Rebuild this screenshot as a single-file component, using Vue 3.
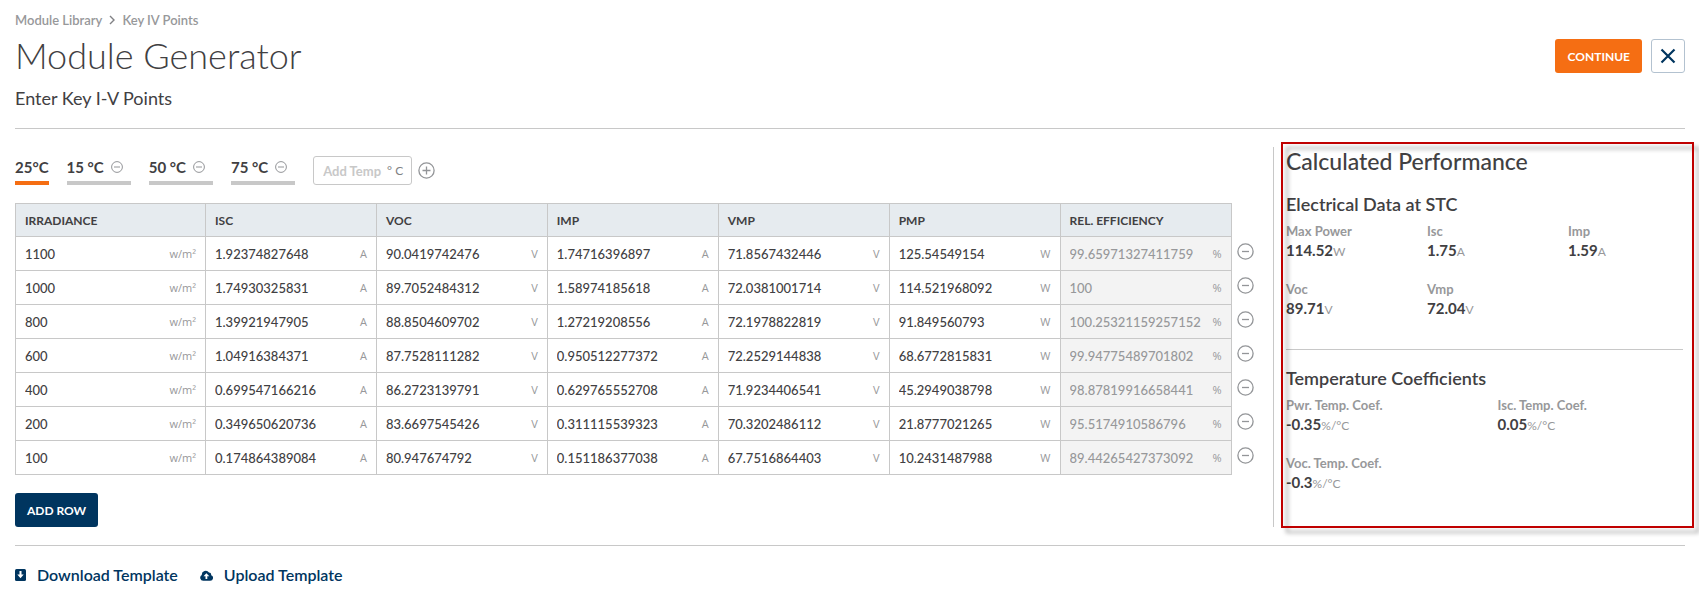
<script setup>
import { ref } from 'vue'

const columns = [
  { key: 'irradiance', label: 'IRRADIANCE', unit: 'w/m²' },
  { key: 'isc', label: 'ISC', unit: 'A' },
  { key: 'voc', label: 'VOC', unit: 'V' },
  { key: 'imp', label: 'IMP', unit: 'A' },
  { key: 'vmp', label: 'VMP', unit: 'V' },
  { key: 'pmp', label: 'PMP', unit: 'W' },
  { key: 'eff', label: 'REL. EFFICIENCY', unit: '%', computed: true }
]

const makeRow = (...values) => Object.fromEntries(columns.map((c, i) => [c.key, values[i] ?? '']))

const rows = ref([
  makeRow('1100', '1.92374827648', '90.0419742476', '1.74716396897', '71.8567432446', '125.54549154', '99.65971327411759'),
  makeRow('1000', '1.74930325831', '89.7052484312', '1.58974185618', '72.0381001714', '114.521968092', '100'),
  makeRow('800', '1.39921947905', '88.8504609702', '1.27219208556', '72.1978822819', '91.849560793', '100.25321159257152'),
  makeRow('600', '1.04916384371', '87.7528111282', '0.950512277372', '72.2529144838', '68.6772815831', '99.94775489701802'),
  makeRow('400', '0.699547166216', '86.2723139791', '0.629765552708', '71.9234406541', '45.2949038798', '98.87819916658441'),
  makeRow('200', '0.349650620736', '83.6697545426', '0.311115539323', '70.3202486112', '21.8777021265', '95.5174910586796'),
  makeRow('100', '0.174864389084', '80.947674792', '0.151186377038', '67.7516864403', '10.2431487988', '89.44265427373092')
])

const temps = ref([
  { label: '25°C', fixed: true },
  { label: '15 °C' },
  { label: '50 °C' },
  { label: '75 °C' }
])
const active = ref('25°C')
const newTemp = ref('')

const electrical = [
  { label: 'Max Power', value: '114.52', unit: 'W' },
  { label: 'Isc', value: '1.75', unit: 'A' },
  { label: 'Imp', value: '1.59', unit: 'A' },
  { label: 'Voc', value: '89.71', unit: 'V' },
  { label: 'Vmp', value: '72.04', unit: 'V' }
]
const coefficients = [
  { label: 'Pwr. Temp. Coef.', value: '-0.35', unit: '%/°C' },
  { label: 'Isc. Temp. Coef.', value: '0.05', unit: '%/°C' },
  { label: 'Voc. Temp. Coef.', value: '-0.3', unit: '%/°C' }
]

function addTemp() {
  if (!newTemp.value) return
  temps.value.push({ label: `${newTemp.value} °C` })
  newTemp.value = ''
}
</script>

<template>
  <div class="page">
    <header class="header">
      <nav class="breadcrumb" aria-label="Breadcrumb">
        <a href="#library">Module Library</a>
        <svg width="6" height="10" viewBox="0 0 6 10" aria-hidden="true"><path d="M1 1l4 4-4 4" /></svg>
        <a href="#points">Key IV Points</a>
      </nav>
      <div class="title-row">
        <h1>Module Generator</h1>
        <div class="actions">
          <button class="btn btn-orange" type="button">CONTINUE</button>
          <button class="btn-close" type="button" aria-label="Close">
            <svg width="16" height="16" viewBox="0 0 16 16" aria-hidden="true"><path d="M1.5 1.5l13 13M14.5 1.5l-13 13" /></svg>
          </button>
        </div>
      </div>
      <p class="subtitle">Enter Key I-V Points</p>
    </header>

    <main class="main">
      <section class="editor">
        <div class="temps">
          <div v-for="(t, i) in temps" :key="t.label" class="tab" :class="{ active: t.label === active }">
            <button class="tab-label" type="button" @click="active = t.label">{{ t.label }}</button>
            <button v-if="!t.fixed" class="icon-btn tab-remove" type="button" :aria-label="`Remove ${t.label}`" @click="temps.splice(i, 1)">
              <svg width="12" height="12" viewBox="0 0 12 12" aria-hidden="true"><circle cx="6" cy="6" r="5.4" /><path d="M3 6h6" /></svg>
            </button>
          </div>
          <label class="temp-box">
            <input v-model="newTemp" type="text" placeholder="Add Temp" aria-label="Add temperature" />
            <span>° C</span>
          </label>
          <button class="icon-btn temp-add" type="button" aria-label="Add temperature" @click="addTemp">
            <svg width="17" height="17" viewBox="0 0 17 17" aria-hidden="true"><circle cx="8.5" cy="8.5" r="7.6" /><path d="M4.5 8.5h8M8.5 4.5v8" /></svg>
          </button>
        </div>

        <table class="grid">
          <colgroup>
            <col class="col-first" />
            <col v-for="c in columns.slice(1)" :key="c.key" />
            <col class="col-remove" />
          </colgroup>
          <thead>
            <tr>
              <th v-for="c in columns" :key="c.key" scope="col">{{ c.label }}</th>
              <td class="remove"></td>
            </tr>
          </thead>
          <tbody>
            <tr v-for="(row, i) in rows" :key="i">
              <td v-for="c in columns" :key="c.key" :class="{ computed: c.computed }">
                <label class="cell">
                  <input v-model="row[c.key]" type="text" :readonly="c.computed" :aria-label="`${c.label} row ${i + 1}`" />
                  <span>{{ c.unit }}</span>
                </label>
              </td>
              <td class="remove">
                <button class="icon-btn" type="button" :aria-label="`Remove row ${i + 1}`" @click="rows.splice(i, 1)">
                  <svg width="17" height="17" viewBox="0 0 17 17" aria-hidden="true"><circle cx="8.5" cy="8.5" r="7.6" /><path d="M5 8.5h7" /></svg>
                </button>
              </td>
            </tr>
          </tbody>
        </table>

        <button class="btn btn-navy" type="button" @click="rows.push(makeRow())">ADD ROW</button>
      </section>

      <aside class="results">
        <h2>Calculated Performance</h2>
        <h3>Electrical Data at STC</h3>
        <dl class="stats three">
          <div v-for="s in electrical" :key="s.label">
            <dt>{{ s.label }}</dt>
            <dd>{{ s.value }}<small>{{ s.unit }}</small></dd>
          </div>
        </dl>
        <hr />
        <h3>Temperature Coefficients</h3>
        <dl class="stats two">
          <div v-for="s in coefficients" :key="s.label">
            <dt>{{ s.label }}</dt>
            <dd>{{ s.value }}<small>{{ s.unit }}</small></dd>
          </div>
        </dl>
        <div class="highlight" aria-hidden="true"></div>
      </aside>
    </main>

    <footer class="footer">
      <a href="#download">
        <svg width="11" height="12" viewBox="0 0 11 12" aria-hidden="true">
          <rect width="11" height="12" rx="1.5" fill="#00355f" />
          <path d="M4.5 2h2v3.6h2.2L5.5 9.2 2.3 5.6h2.2z" fill="#fff" />
        </svg>
        Download Template
      </a>
      <a href="#upload">
        <svg width="13" height="11" viewBox="0 0 13 11" aria-hidden="true">
          <path d="M3.2 10.8A3.1 3.1 0 0 1 1.8 5 3.9 3.9 0 0 1 9 2.6 2.3 2.3 0 0 1 11.2 5.2 2.9 2.9 0 0 1 10.2 10.8z" fill="#00355f" />
          <path d="M6.4 3.2L9.3 6.2H7.3V9H5.5V6.2H3.5z" fill="#fff" />
        </svg>
        Upload Template
      </a>
    </footer>
  </div>
</template>

<style>
body {
  background: #fff;
}
</style>

<style scoped>
.page {
  box-sizing: border-box;
  padding: 10px 14px 0 15px;
  overflow: hidden;
  font-family: Lato, "Open Sans", sans-serif;
  color: #414042;
}
button,
input {
  margin: 0;
  padding: 0;
  border: 0;
  background: none;
  font: inherit;
  color: inherit;
}
button {
  cursor: pointer;
}
h1,
h2,
h3,
p,
dl,
dd {
  margin: 0;
}
.header {
  border-bottom: 1px solid #c8c8c8;
  padding-bottom: 18px;
}
.breadcrumb {
  display: flex;
  align-items: center;
  gap: 7px;
  font-size: 13px;
  line-height: 20px;
}
.breadcrumb a {
  color: #97989a;
  font-weight: 600;
  text-decoration: none;
}
.breadcrumb path {
  fill: none;
  stroke: #808184;
  stroke-width: 1.4;
}
.title-row {
  display: flex;
  align-items: center;
  justify-content: space-between;
  margin: 4px 0 8px;
}
h1 {
  padding-bottom: 2px;
  font-size: 36px;
  line-height: 42px;
  font-weight: 300;
}
.actions {
  display: flex;
  gap: 9px;
}
.btn {
  height: 34px;
  padding: 0 12px;
  border-radius: 3px;
  color: #fff;
  font-size: 12px;
  font-weight: 700;
}
.btn-orange {
  background: #f56e13;
}
.btn-navy {
  display: block;
  margin-top: 18px;
  background: #00355f;
}
.btn-close {
  display: grid;
  place-items: center;
  width: 34px;
  height: 34px;
  border: 1px solid #b3c2d0;
  border-radius: 3px;
}
.btn-close path {
  fill: none;
  stroke: #00355f;
  stroke-width: 2.2;
}
.subtitle {
  font-size: 18px;
  line-height: 24px;
}
.main {
  display: grid;
  grid-template-columns: minmax(0, 1fr) 412px;
  margin: 18px 0;
}
.editor {
  padding: 8px 19px 0 0;
}
.temps {
  display: flex;
  align-items: flex-end;
  margin-bottom: 18px;
}
.tab {
  display: flex;
  align-items: center;
  gap: 7px;
  margin-right: 18px;
  padding: 0 8px 2px 0;
  border-bottom: 4px solid #c8c8c8;
}
.tab.active {
  padding-right: 0;
  border-color: #f56e13;
}
.tab-label {
  font-size: 15px;
  line-height: 24px;
  font-weight: 700;
}
.icon-btn {
  display: block;
  line-height: 0;
}
.icon-btn svg {
  display: block;
  fill: none;
  stroke: #939598;
  stroke-width: 1.3;
}
.tab-remove svg {
  stroke-width: 1;
}
.temp-box {
  box-sizing: border-box;
  display: flex;
  align-items: center;
  width: 99px;
  height: 29px;
  padding: 0 8px 0 9px;
  border: 1px solid #c8c8c8;
  border-radius: 3px;
  font-size: 13px;
}
.temp-box input {
  flex: 1;
  min-width: 0;
  outline: 0;
}
.temp-box input::placeholder {
  color: #c8c8c8;
  font-weight: 700;
  opacity: 1;
}
.temp-box span {
  color: #808184;
  font-size: 12px;
}
.temp-add {
  align-self: flex-end;
  margin: 0 0 6px 6px;
}
.grid {
  width: 100%;
  table-layout: fixed;
  border-collapse: collapse;
}
.col-first {
  width: 190px;
}
.col-remove {
  width: 23px;
}
.grid th,
.grid td {
  box-sizing: border-box;
  height: 34px;
  padding: 0 9px;
  border: 1px solid #c8c8c8;
}
.grid thead th,
.grid thead td {
  height: 33px;
}
.grid th {
  background: #e6ebef;
  text-align: left;
  font-size: 12px;
  font-weight: 700;
}
.grid td.remove {
  padding: 0 0 4px 5px;
  border-width: 0 0 0 1px;
}
.cell {
  display: flex;
  align-items: center;
  font-size: 13px;
  line-height: 18px;
}
.cell input {
  flex: 1;
  min-width: 0;
  height: 18px;
  font-weight: 500;
  outline: 0;
}
.cell span {
  color: #97989a;
  font-family: "Open Sans", sans-serif;
  font-size: 11px;
}
.grid .computed {
  background: #f3f3f3;
  color: #97989a;
}
.results {
  position: relative;
  padding: 0 2px 0 12px;
  border-left: 1px solid #c8c8c8;
}
h2 {
  margin-bottom: 17px;
  font-size: 23px;
  line-height: 28px;
  font-weight: 500;
}
h3 {
  margin-bottom: 6px;
  font-size: 18px;
  line-height: 24px;
  font-weight: 600;
}
.stats {
  display: grid;
  gap: 20px 26px;
}
.three {
  grid-template-columns: repeat(3, minmax(0, 1fr));
}
.two {
  grid-template-columns: repeat(2, minmax(0, 1fr));
}
dt {
  color: #97989a;
  font-size: 13px;
  line-height: 18px;
  font-weight: 700;
}
dd {
  font-size: 15px;
  line-height: 20px;
  font-weight: 700;
}
dd small {
  color: #97989a;
  font-size: 12px;
  line-height: 1;
  font-weight: 400;
}
hr {
  margin: 31px 0 16px;
  border: 0;
  border-top: 1px solid #c8c8c8;
}
.highlight {
  position: absolute;
  inset: -5px -9px -1px 7px;
  border: 2px solid #c00000;
  filter: drop-shadow(5px 5px 2px rgba(0, 0, 0, 0.35));
  pointer-events: none;
}
.footer {
  display: flex;
  gap: 22px;
  padding-top: 17px;
  border-top: 1px solid #c8c8c8;
}
.footer a {
  display: flex;
  align-items: center;
  gap: 11px;
  color: #00355f;
  font-size: 16px;
  line-height: 24px;
  font-weight: 600;
  text-decoration: none;
}
</style>
